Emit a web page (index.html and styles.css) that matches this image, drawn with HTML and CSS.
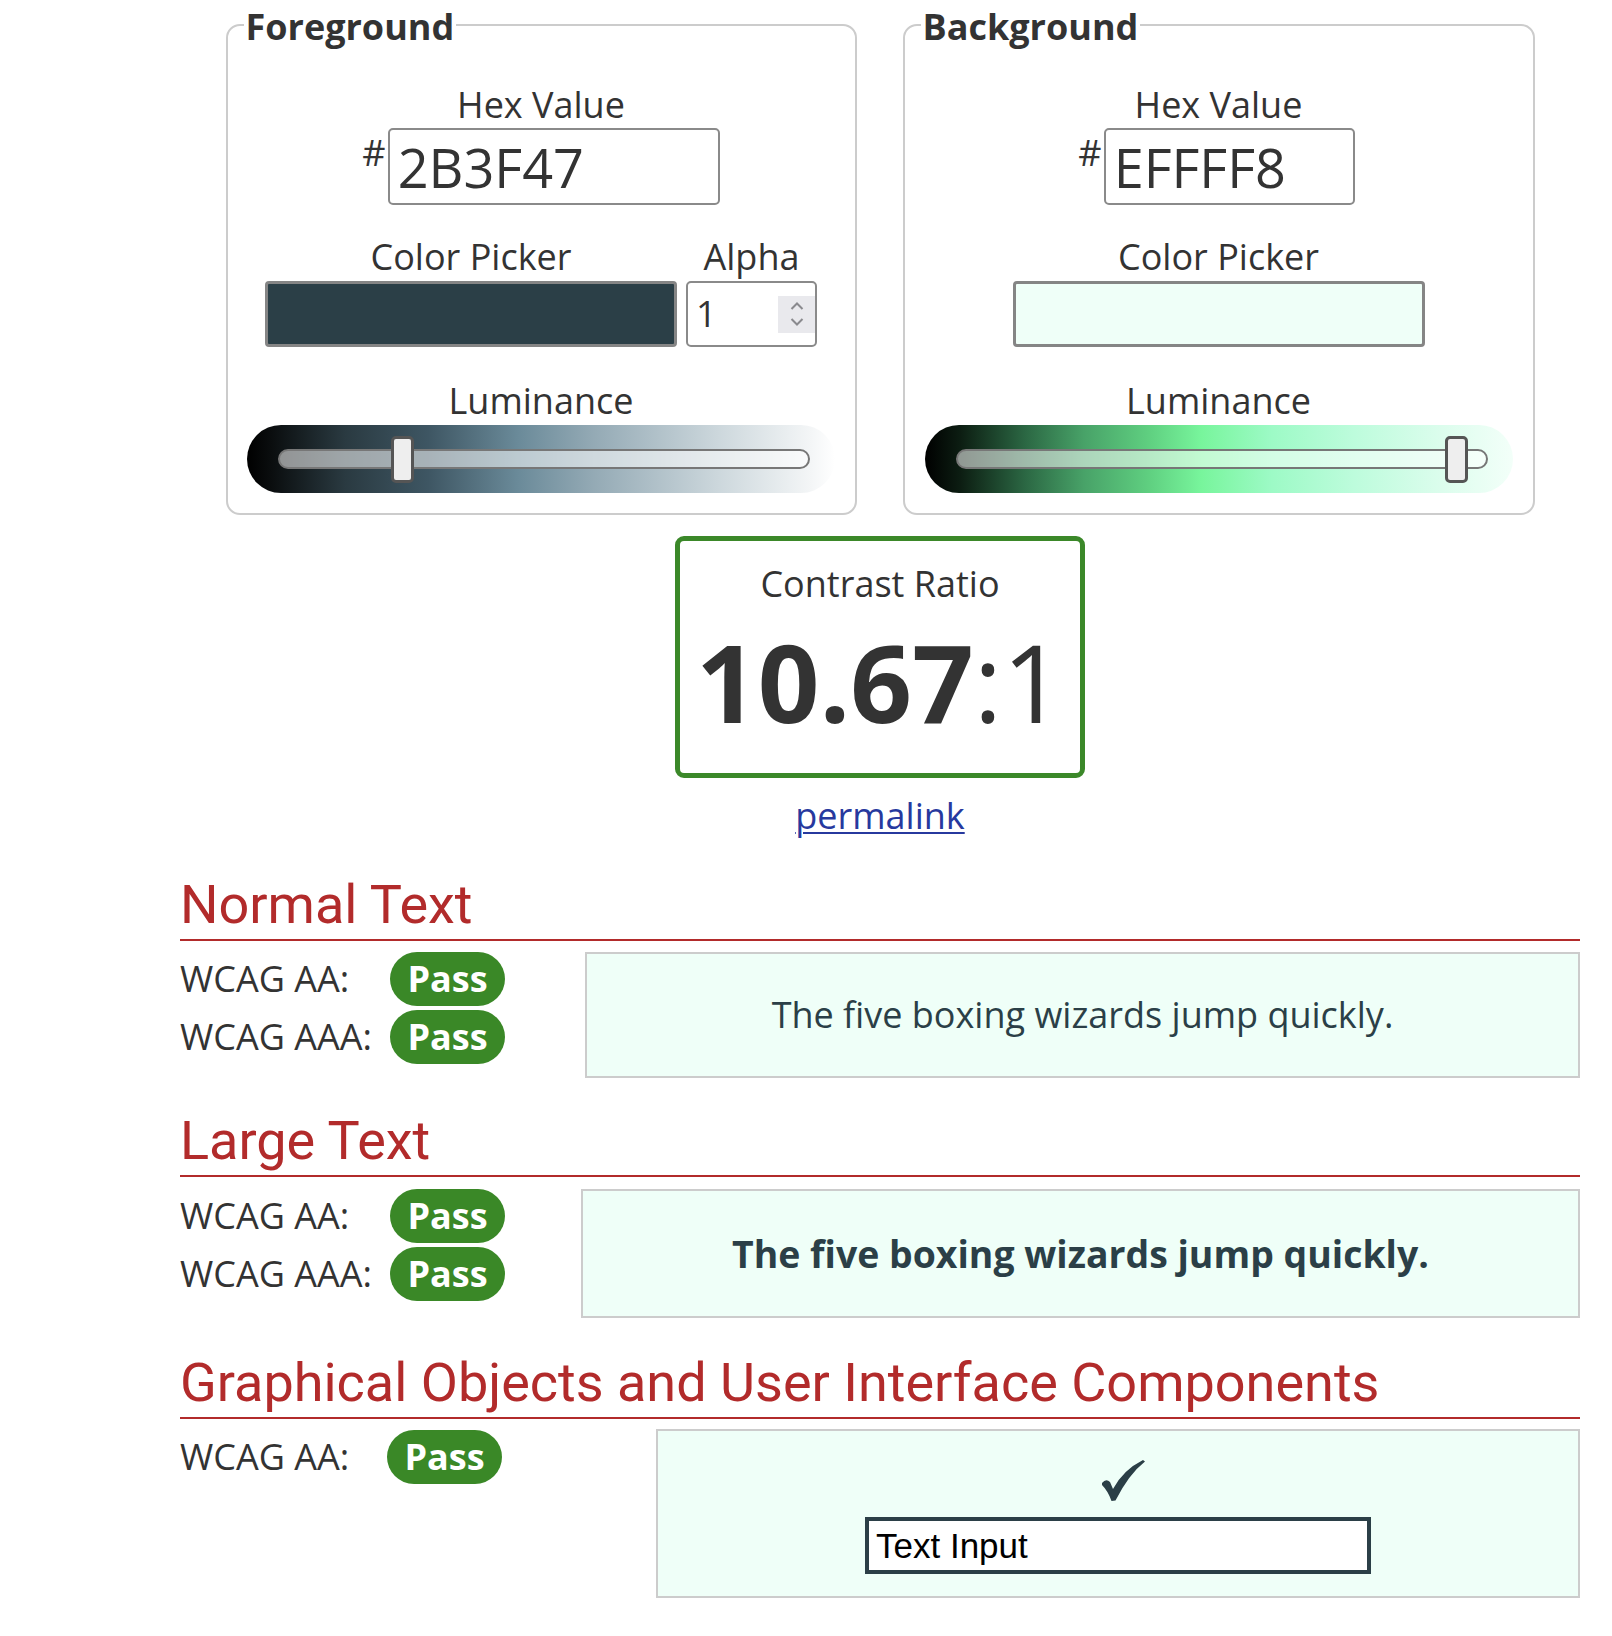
FILE: index.html
```html
<!DOCTYPE html>
<html lang="en">
<head>
<meta charset="utf-8">
<title>Contrast Checker</title>
<link rel="stylesheet" href="styles.css">
</head>
<body>
<div class="page">
  <div class="pickers">
    <fieldset class="panel panel-fg">
      <legend>Foreground</legend>
      <div class="field field-hex">
        <div class="lbl">Hex Value</div>
        <div class="hex-row">
          <span class="hash">#</span>
          <input class="hex hex-fg" type="text" value="2B3F47">
        </div>
      </div>
      <div class="pick-row">
        <div class="pick-col">
          <div class="lbl">Color Picker</div>
          <div class="swatch swatch-fg"></div>
        </div>
        <div class="alpha-col">
          <div class="lbl">Alpha</div>
          <div class="alpha">
            <span class="alpha-val">1</span>
            <span class="spin">
              <svg width="16" height="28" viewBox="0 0 16 28"><path d="M2.5 9 L8 3.5 L13.5 9" fill="none" stroke="#8a8a8e" stroke-width="2"/><path d="M2.5 19 L8 24.5 L13.5 19" fill="none" stroke="#8a8a8e" stroke-width="2"/></svg>
            </span>
          </div>
        </div>
      </div>
      <div class="field field-lum">
        <div class="lbl">Luminance</div>
        <div class="lum lum-fg">
          <div class="track"><div class="thumb" style="--l:0.2235"></div></div>
        </div>
      </div>
    </fieldset>

    <fieldset class="panel panel-bg">
      <legend>Background</legend>
      <div class="field field-hex">
        <div class="lbl">Hex Value</div>
        <div class="hex-row hex-row-bg">
          <span class="hash">#</span>
          <input class="hex hex-bg" type="text" value="EFFFF8">
        </div>
      </div>
      <div class="pick-row">
        <div class="pick-col">
          <div class="lbl">Color Picker</div>
          <div class="swatch swatch-bg"></div>
        </div>
      </div>
      <div class="field field-lum">
        <div class="lbl">Luminance</div>
        <div class="lum lum-bg">
          <div class="track"><div class="thumb" style="--l:0.9686"></div></div>
        </div>
      </div>
    </fieldset>
  </div>

  <div class="ratio-wrap">
    <div class="ratio-box">
      <div class="lbl ratio-lbl">Contrast Ratio</div>
      <div class="ratio"><b>10.67</b>:1</div>
    </div>
    <a class="permalink" href="#">permalink</a>
  </div>

  <section class="sec sec-normal">
    <h2>Normal Text</h2>
    <div class="sec-body">
      <div class="results">
        <div class="res"><span class="res-lbl">WCAG AA:</span><span class="pass">Pass</span></div>
        <div class="res"><span class="res-lbl">WCAG AAA:</span><span class="pass">Pass</span></div>
      </div>
      <div class="sample">The five boxing wizards jump quickly.</div>
    </div>
  </section>

  <section class="sec sec-large">
    <h2>Large Text</h2>
    <div class="sec-body">
      <div class="results">
        <div class="res"><span class="res-lbl">WCAG AA:</span><span class="pass">Pass</span></div>
        <div class="res"><span class="res-lbl">WCAG AAA:</span><span class="pass">Pass</span></div>
      </div>
      <div class="sample sample-bold">The five boxing wizards jump quickly.</div>
    </div>
  </section>

  <section class="sec sec-ui">
    <h2>Graphical Objects and User Interface Components</h2>
    <div class="sec-body">
      <div class="results">
        <div class="res"><span class="res-lbl">WCAG AA:</span><span class="pass">Pass</span></div>
      </div>
      <div class="sample sample-ui">
        <svg class="check" width="44" height="41" viewBox="0 0 44 41"><path d="M1 23 Q5 18 9 22 L12 29 Q22 10 42 0 L44 1.5 Q28 14 14.5 40.5 L10.5 41 Q7 31 1 25 Z" fill="#2b3f47"/></svg>
        <input class="ui-input" type="text" value="Text Input">
      </div>
    </div>
  </section>
</div>
</body>
</html>
```

FILE: styles.css
```css
* { box-sizing: border-box; }

body {
  margin: 0;
  background: #fff;
  color: #333;
  font-family: "Open Sans", "Liberation Sans", sans-serif;
  font-size: 36px;
}

.page {
  width: 1580px;
  padding-left: 180px;
  padding-top: 1px;
  padding-bottom: 40px;
}

/* ---------- pickers ---------- */
.pickers {
  display: flex;
  justify-content: center;
  gap: 46px;
}

.panel {
  margin: 0;
  width: 631px;
  min-width: 0;
  border: 2px solid #ccc;
  border-radius: 14px;
  padding: 0 16px 20px;
  text-align: center;
}

.panel-bg { width: 632px; }

.panel legend {
  font-weight: 700;
  font-size: 36px;
  line-height: 44px;
  padding: 4px 2px 0;
  color: #333;
  text-align: left;
}

.lbl {
  font-size: 36px;
  line-height: 44px;
  color: #333;
}

.field-hex { margin-top: 34px; }

.hex-row {
  margin-top: 1px;
  display: flex;
  justify-content: center;
  align-items: flex-start;
}

.hex-row-bg { padding-right: 4px; }

.hash {
  font-size: 36px;
  line-height: 50px;
  color: #333;
  margin-right: 2px;
}

.hex {
  height: 77px;
  border: 2px solid #8a8a8a;
  border-radius: 5px;
  padding: 0 0 0 8px;
  font-family: "Open Sans", sans-serif;
  font-size: 54px;
  color: #333;
  background: #fff;
  outline: none;
}

.hex-fg { width: 332px; }
.hex-bg { width: 251px; }

.pick-row {
  margin-top: 30px;
  display: flex;
  justify-content: center;
  gap: 9px;
}

.pick-col, .alpha-col {
  display: flex;
  flex-direction: column;
  align-items: center;
}

.swatch {
  margin-top: 2px;
  width: 412px;
  height: 66px;
  border: 3px solid #858585;
  border-radius: 4px;
}

.swatch-fg { background: #2b3f47; }
.swatch-bg { background: #effff8; }

.alpha {
  margin-top: 2px;
  width: 131px;
  height: 66px;
  border: 2px solid #8a8a8a;
  border-radius: 5px;
  display: flex;
  align-items: center;
  justify-content: space-between;
  padding-left: 8px;
  background: #fff;
}

.alpha-val {
  font-size: 36px;
  line-height: 44px;
  color: #333;
}

.spin {
  width: 37px;
  height: 37px;
  background: #e9e9ed;
  display: flex;
  align-items: center;
  justify-content: center;
}

.field-lum { margin-top: 32px; }

.lum {
  margin: 2px auto 0;
  width: 588px;
  height: 68px;
  border-radius: 34px;
  display: flex;
  align-items: center;
  padding: 0 25px 0 31px;
}

.lum-fg {
  background: linear-gradient(to right,
    #000 0%, #0a0d0e 4%, #2a3a41 16.7%, #3e5663 30.8%, #6a8a99 46%,
    #94aab5 59%, #ccd7dc 80%, #f4f6f7 96%, #fff 100%);
}

.lum-bg {
  background: linear-gradient(to right,
    #000 0%, #0c1d12 6%, #2b6743 17%, #48a268 27%, #5fcf80 38%,
    #78f59c 47%, #9dfac6 59%, #bdfcdc 73%, #dcfded 88%, #f3fff9 100%);
}

.track {
  position: relative;
  flex: 1;
  height: 20px;
  border: 2px solid #777;
  border-radius: 10px;
  background: rgba(255, 255, 255, 0.55);
}

.thumb {
  position: absolute;
  top: -15.5px;
  left: calc(var(--l) * (100% - 23px) - 2px);
  width: 23px;
  height: 47px;
  border: 3px solid #555;
  border-radius: 5px;
  background: #eee;
}

/* ---------- ratio ---------- */
.ratio-wrap {
  margin-top: 21px;
  display: flex;
  flex-direction: column;
  align-items: center;
}

.ratio-box {
  width: 410px;
  height: 242px;
  border: 5px solid #3b8829;
  border-radius: 9px;
  text-align: center;
  padding-top: 21px;
}

.ratio {
  margin-top: 6px;
  font-size: 108px;
  line-height: 140px;
  color: #333;
  font-weight: 400;
}

.ratio b { font-weight: 700; }

.permalink {
  margin-top: 16px;
  font-size: 36px;
  line-height: 44px;
  color: #27399e;
  text-decoration: underline;
  text-underline-offset: 3px;
  text-decoration-thickness: 2px;
}

/* ---------- sections ---------- */
.sec { margin-top: 32px; }
.sec-normal { margin-top: 34px; }
.sec-large { margin-top: 30px; }

.sec h2 {
  margin: 0;
  font-family: Roboto, "Liberation Sans", sans-serif;
  font-weight: 400;
  font-size: 54px;
  line-height: 66px;
  color: #b22b2b;
  border-bottom: 2px solid #b22b2b;
  padding-bottom: 1px;
}

.sec-body {
  margin-top: 12px;
  display: flex;
  align-items: flex-start;
}

.sec-normal .sec-body { margin-top: 11px; }
.sec-ui .sec-body { margin-top: 10px; }
.sec-ui .results { margin-top: 1px; }

.results {
  display: flex;
  flex-direction: column;
  gap: 4px;
  flex: none;
}

.sec-normal .results { width: 405px; }
.sec-large .results { width: 401px; }
.sec-ui .results { width: 476px; }

.res {
  display: flex;
  align-items: center;
  height: 54px;
}

.res-lbl {
  width: 210px;
  font-size: 36px;
  line-height: 54px;
  color: #333;
}

.sec-ui .res-lbl { width: 207px; }

.pass {
  height: 54px;
  line-height: 54px;
  padding: 0 17.5px;
  border-radius: 27px;
  background: #3a8827;
  color: #fff;
  font-weight: 700;
  font-size: 36px;
}

.sample {
  flex: 1;
  border: 2px solid #ccc;
  background: #effff8;
  color: #2b3f47;
  display: flex;
  align-items: center;
  justify-content: center;
  font-size: 36px;
  line-height: 44px;
}

.sec-normal .sample { height: 126px; }
.sec-large .sample { height: 129px; }

.sample-bold {
  font-weight: 700;
  font-size: 37.4px;
}

.sample-ui {
  height: 169px;
  flex-direction: column;
  justify-content: flex-start;
  padding-top: 29px;
}

.check { display: block; margin-left: 10px; }

.ui-input {
  margin-top: 16px;
  width: 506px;
  height: 57px;
  border: 4px solid #2b3f47;
  background: #fff;
  padding: 0 7px;
  font-family: "Liberation Sans", Arial, sans-serif;
  font-size: 35px;
  color: #000;
  outline: none;
}
```
